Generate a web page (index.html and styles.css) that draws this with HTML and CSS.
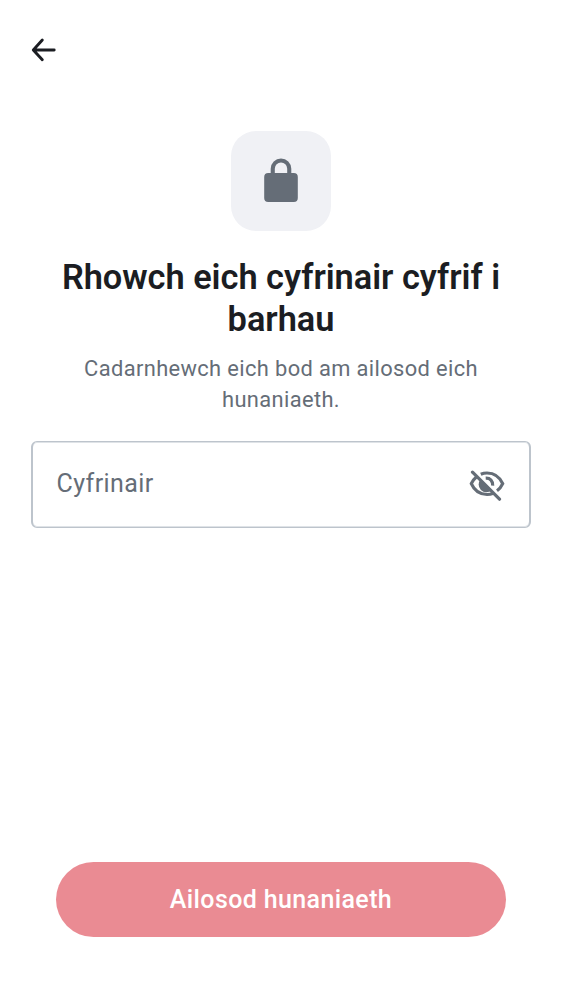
FILE: index.html
```html
<!DOCTYPE html>
<html lang="cy">
<head>
<meta charset="utf-8">
<title>Ailosod hunaniaeth</title>
<link rel="stylesheet" href="styles.css">
</head>
<body>
<main class="screen">
  <header class="top-bar">
    <button class="icon-button" aria-label="Yn ôl">
      <svg class="back-icon" viewBox="0 0 25 24"><path d="M11.300 2.100 2.300 12l9 9.800M2.500 12h20.700" fill="none" stroke="currentColor" stroke-width="2.900" stroke-linecap="round" stroke-linejoin="round"/></svg>
    </button>
  </header>
  <section class="intro">
    <div class="lock-tile">
      <svg class="lock-icon" viewBox="0 0 34 44"><path fill="currentColor" fill-rule="evenodd" d="M4.200 44a4 4 0 0 1-4-4V19a4 4 0 0 1 4-4h2.500v-4.300a10.300 10.300 0 0 1 20.600 0V15h2.500a4 4 0 0 1 4 4v21a4 4 0 0 1-4 4ZM10.800 15h12.400v-4.300a6.200 6.200 0 0 0-12.400 0Z"/></svg>
    </div>
    <h1 class="title">Rhowch eich cyfrinair cyfrif i barhau</h1>
    <p class="subtitle">Cadarnhewch eich bod am ailosod eich hunaniaeth.</p>
  </section>
  <div class="field">
    <span class="placeholder">Cyfrinair</span>
    <svg class="eye-icon" viewBox="0 0 36 32"><g fill="none" stroke="currentColor" stroke-width="3.200"><path d="M11.800 4.300Q14.700 3 18 3c6.800 0 12.700 4 15.700 10.700-1.300 2.900-3.200 5.300-5.700 7.100M24.300 23.200Q21.300 24.500 18 24.500c-6.800 0-12.700-4-15.700-10.800Q4.200 9.500 7.600 6.700"/><path d="M16.700 8.200c4.500-.2 7.300 2.600 7 7.500"/></g><path d="M11.900 9.200 22.700 20A7.600 7.600 0 0 1 11.900 9.200Z" fill="currentColor"/><path d="m3.500 2.200 27 27" stroke="currentColor" stroke-width="3.200" stroke-linecap="round"/></svg>
  </div>
  <footer class="footer">
    <button class="reset">Ailosod hunaniaeth</button>
  </footer>
</main>
</body>
</html>
```
FILE: styles.css
```css
* { box-sizing: border-box; }
body { margin: 0; background: #fff; font-family: Roboto, sans-serif; }
svg { display: block; }
button { border: 0; padding: 0; font: inherit; cursor: pointer; }
.screen { height: 1000px; display: flex; flex-direction: column; }
.top-bar { height: 131px; padding: 38px 31px 0; }
.icon-button { background: none; color: #1b1d22; }
.back-icon { width: 25px; height: 24px; }
.intro { display: flex; flex-direction: column; align-items: center; text-align: center; }
.lock-tile { width: 100px; height: 100px; padding-bottom: 2px; border-radius: 25px; background: #f0f1f5; color: #656d77; display: grid; place-items: center; }
.lock-icon { width: 34px; height: 44px; }
.title { margin: 25px 0 0; padding: 0 50px; font-size: 34.375px; line-height: 42px; font-weight: 600; letter-spacing: -.03px; color: #1b1d22; }
.subtitle { margin: 13px 0 0; padding: 0 70px; font-size: 21.875px; line-height: 31px; letter-spacing: .37px; color: #656d77; }
.field { height: 87px; margin: 26px 31px 0; padding: 0 25px 0 23.500px; border: 2px solid #bdc4cc; border-width: 1px 2px; border-radius: 6px; box-shadow: inset 0 1px #dfe3e7, inset 0 -1px #dfe3e7; display: flex; align-items: center; justify-content: space-between; color: #656d77; }
.placeholder { padding-bottom: 3px; font-size: 25px; letter-spacing: .4px; }
.eye-icon { width: 36px; height: 32px; margin: 2px -1px 0 0; }
.footer { margin-top: auto; padding: 0 56px 63px; }
.reset { display: block; width: 100%; height: 75px; border-radius: 38px; background: #ea8b93; color: #fff; font-size: 25px; font-weight: 500; letter-spacing: .38px; }
```
